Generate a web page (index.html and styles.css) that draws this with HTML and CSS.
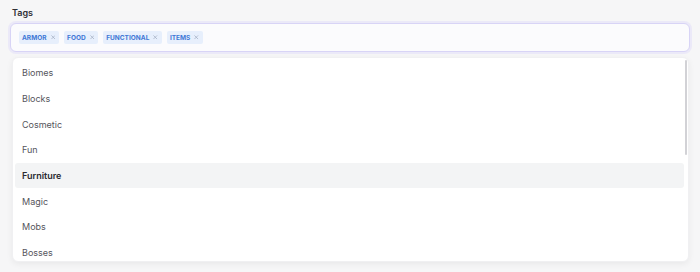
FILE: index.html
```html
<!DOCTYPE html>
<html lang="en">
<head>
<meta charset="utf-8">
<title>Tags</title>
<link rel="stylesheet" href="styles.css">
</head>
<body>
<div class="field">
  <label class="label">Tags</label>
  <div class="input">
    <span class="chip">ARMOR<svg class="x" viewBox="0 0 5 5"><path d="M0.5 0.5L4.5 4.5M4.5 0.5L0.5 4.5"/></svg></span>
    <span class="chip">FOOD<svg class="x" viewBox="0 0 5 5"><path d="M0.5 0.5L4.5 4.5M4.5 0.5L0.5 4.5"/></svg></span>
    <span class="chip">FUNCTIONAL<svg class="x" viewBox="0 0 5 5"><path d="M0.5 0.5L4.5 4.5M4.5 0.5L0.5 4.5"/></svg></span>
    <span class="chip">ITEMS<svg class="x" viewBox="0 0 5 5"><path d="M0.5 0.5L4.5 4.5M4.5 0.5L0.5 4.5"/></svg></span>
  </div>
  <div class="dropdown">
    <ul class="list">
      <li class="opt">Biomes</li>
      <li class="opt">Blocks</li>
      <li class="opt">Cosmetic</li>
      <li class="opt">Fun</li>
      <li class="opt active">Furniture</li>
      <li class="opt">Magic</li>
      <li class="opt">Mobs</li>
      <li class="opt">Bosses</li>
    </ul>
    <div class="thumb"></div>
  </div>
</div>
</body>
</html>
```
FILE: styles.css
```css
* { box-sizing: border-box; }
html, body { margin: 0; padding: 0; }
body {
  background: #f6f6f7;
  font-family: Inter, "Noto Sans", sans-serif;
  width: 700px;
  height: 272px;
  overflow: hidden;
}
.field {
  padding: 7px 10px 0 10px;
  display: flex;
  flex-direction: column;
}
.label {
  font-size: 9px;
  font-weight: 600;
  color: #2e2e33;
  line-height: 12px;
  padding-left: 2px;
  margin-bottom: 4px;
}
.input {
  height: 29px;
  border: 1px solid #d8d4f6;
  border-radius: 6px;
  background: #fbfbfd;
  box-shadow: 0 0 0 2px rgba(214, 210, 250, 0.35);
  display: flex;
  align-items: center;
  gap: 5px;
  padding-left: 8px;
}
.chip {
  display: inline-flex;
  align-items: center;
  height: 13px;
  padding: 0 4px 0 3px;
  background: #e7effc;
  border-radius: 2px;
  color: #4077d6;
  font-size: 6.5px;
  font-weight: 700;
  letter-spacing: 0.02px;
}
.x {
  margin-left: 4px;
  width: 4.5px;
  height: 4.5px;
  fill: none;
  stroke: #a0abc0;
  stroke-width: 0.8;
}
.dropdown {
  position: relative;
  margin: 5px 1px 0 2px;
  height: 205px;
  background: #ffffff;
  border: 1px solid #f0f0f2;
  border-radius: 6px;
  box-shadow: 0 2px 6px rgba(0, 0, 0, 0.06);
  overflow: hidden;
  padding: 2px 4px 0 2px;
}
.thumb {
  position: absolute;
  right: 1px;
  top: 2px;
  width: 2px;
  height: 95px;
  background: #d2d2d6;
  border-radius: 1px;
}
.list {
  list-style: none;
  margin: 0;
  padding: 0;
}
.opt {
  height: 25.66px;
  display: flex;
  align-items: center;
  padding-left: 7px;
  font-size: 9px;
  color: #55555c;
  border-radius: 3px;
}
.opt.active {
  background: #f3f4f5;
  color: #2a2a30;
  font-weight: 600;
}
```
